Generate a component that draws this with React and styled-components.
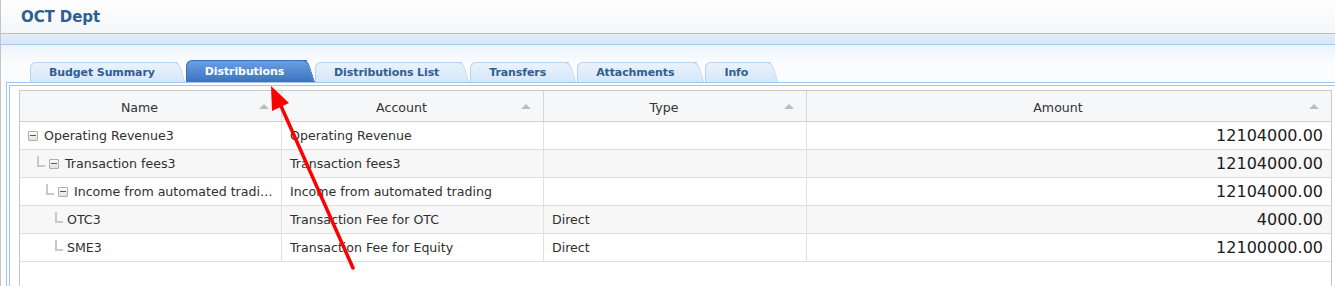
import React from 'react';
import styled, { createGlobalStyle } from 'styled-components';

const GlobalStyle = createGlobalStyle`
html, body {
  margin: 0;
  padding: 0;
  overflow: hidden;
  background: #ffffff;
}
body {
  font-family: "DejaVu Sans", Verdana, sans-serif;
}
`

const Page = styled.div`
position: relative;
width: 1335px;
height: 286px;
overflow: hidden;
border-left: 1px solid #c4c4c4;
box-sizing: border-box;
`

const TitleBar = styled.div`
height: 34px;
box-sizing: border-box;
display: flex;
align-items: center;
padding-left: 20px;
background: linear-gradient(#ffffff, #f4f5f7);
border-bottom: 1px solid #bdbdbd;
`

const Title = styled.h1`
margin: 0;
font-size: 15px;
font-weight: bold;
color: #2c5f94;
letter-spacing: -0.1px;
`

const Band = styled.div`
height: 11px;
box-sizing: border-box;
background: linear-gradient(#e2ecf9, #dae7f7);
border-bottom: 1px solid #a8c8ef;
`

const Workspace = styled.div`
padding: 15px 0 0 5px;
background: linear-gradient(#edf4fc 0px, #fbfcfd 18px, #fbfbfc 100%);
`

const TabStrip = styled.div`
display: flex;
align-items: flex-end;
gap: 2px;
height: 22px;
padding-left: 24px;
`

const Tab = styled.div`
position: relative;
z-index: 0;
height: ${p => (p.$active ? 22 : 20)}px;
box-sizing: border-box;
display: flex;
align-items: center;
padding: 0 23px 0 18px;
margin-right: 6px;
font-size: 11px;
font-weight: bold;
letter-spacing: -0.1px;
color: ${p => (p.$active ? '#ffffff' : '#2f5e92')};
background: ${p => (p.$active
    ? 'linear-gradient(#6a9fe0, #3a73c2)'
    : 'linear-gradient(#e9f3fd, #d5e7f9)')};
border: 1px solid ${p => (p.$active ? '#3b6fb6' : '#b4d2f2')};
border-right: none;
border-bottom: none;
border-top-left-radius: 6px;
white-space: nowrap;

&::after {
  content: '';
  position: absolute;
  z-index: -1;
  top: -1px;
  bottom: 0;
  right: -1px;
  width: 14px;
  background: inherit;
  border: 1px solid ${p => (p.$active ? '#3b6fb6' : '#b4d2f2')};
  border-left: none;
  border-bottom: none;
  border-top-right-radius: 6px;
  transform-origin: top left;
  transform: skewX(18deg);
}
`

const Frame = styled.div`
width: 1339px;
box-sizing: border-box;
border: 1px solid #9ec6f1;
padding: 2px;
background: #ffffff;
`

const FrameInner = styled.div`
border: 1px solid #9ec6f1;
padding: 4px 9px 0 9px;
height: 220px;
`

const Grid = styled.div`
border: 1px solid #c8c8c8;
height: 230px;
background: #ffffff;
`

const Row = styled.div`
display: grid;
grid-template-columns: 262px 262px 263px 1fr;
height: ${p => (p.$header ? 31 : 28)}px;
box-sizing: border-box;
border-bottom: 1px solid ${p => (p.$header ? '#cfcfcf' : '#dedede')};
background: ${p => (p.$header ? '#f6f7f9' : p.$striped ? '#f7f7f7' : '#ffffff')};
`

const HeadCell = styled.div`
display: flex;
align-items: center;
padding-top: 2px;
border-right: 1px solid #d6d6d6;
font-size: 12.6px;
color: #333333;

&:last-child {
  border-right: none;
}
`

const HeadLabel = styled.span`
flex: 1;
text-align: center;
`

const SortArrow = styled.span`
width: 0;
height: 0;
margin: 0 12px 2px 0;
border-left: 5px solid transparent;
border-right: 5px solid transparent;
border-bottom: 5px solid #bdbdbd;
`

const Cell = styled.div`
display: flex;
align-items: center;
justify-content: ${p => (p.$right ? 'flex-end' : 'flex-start')};
min-width: 0;
padding: 0 8px;
border-right: 1px solid #e0e0e0;
font-size: ${p => (p.$right ? '16px' : '12.6px')};
color: ${p => (p.$right ? '#1c1c1c' : '#303030')};
white-space: nowrap;

&:last-child {
  border-right: none;
}
`

const NameCell = styled(Cell)`
padding-left: ${p => 8 + p.$level * 9}px;
`

const Elbow = styled.span`
flex: none;
width: 6px;
height: 9px;
margin: 0 4px 5px 0;
border-left: 2px solid #c8c8c8;
border-bottom: 2px solid #c8c8c8;
`

const Toggle = styled.span`
flex: none;
position: relative;
width: 10px;
height: 10px;
box-sizing: border-box;
margin-right: 6px;
border: 1px solid #adadad;
border-radius: 1px;
background: linear-gradient(#fbfbfb, #e2e2e2);

&::after {
  content: '';
  position: absolute;
  left: 1px;
  right: 1px;
  top: 3px;
  height: 1px;
  background: #555555;
}
`

const Annotation = styled.svg`
position: absolute;
left: 0;
top: 0;
pointer-events: none;
`

const tabs = ['Budget Summary', 'Distributions', 'Distributions List', 'Transfers', 'Attachments', 'Info']
const columns = ['Name', 'Account', 'Type', 'Amount']

const rows = [
  { level: 0, name: 'Operating Revenue3', account: 'Operating Revenue', type: '', amount: '12104000.00', folder: true },
  { level: 1, name: 'Transaction fees3', account: 'Transaction fees3', type: '', amount: '12104000.00', folder: true },
  { level: 2, name: 'Income from automated tradi…', account: 'Income from automated trading', type: '', amount: '12104000.00', folder: true },
  { level: 3, name: 'OTC3', account: 'Transaction Fee for OTC', type: 'Direct', amount: '4000.00' },
  { level: 3, name: 'SME3', account: 'Transaction Fee for Equity', type: 'Direct', amount: '12100000.00' },
]

export default function App () {
  return (
    <Page>
      <GlobalStyle />
      <TitleBar>
        <Title>OCT Dept</Title>
      </TitleBar>
      <Band />
      <Workspace>
        <TabStrip>
          {tabs.map((t, i) => (
            <Tab key={t} $active={i === 1}>{t}</Tab>
          ))}
        </TabStrip>
        <Frame>
          <FrameInner>
            <Grid>
              <Row $header>
                {columns.map(c => (
                  <HeadCell key={c}>
                    <HeadLabel>{c}</HeadLabel>
                    <SortArrow />
                  </HeadCell>
                ))}
              </Row>
              {rows.map((r, i) => (
                <Row key={r.name} $striped={i % 2 === 1}>
                  <NameCell $level={r.level}>
                    {r.level > 0 && <Elbow />}
                    {r.folder && <Toggle />}
                    <span>{r.name}</span>
                  </NameCell>
                  <Cell>{r.account}</Cell>
                  <Cell>{r.type}</Cell>
                  <Cell $right>{r.amount}</Cell>
                </Row>
              ))}
            </Grid>
          </FrameInner>
        </Frame>
      </Workspace>
      <Annotation width='1335' height='286'>
        <line x1='352' y1='268' x2='280' y2='106' stroke='#ff0000' strokeWidth='3.5' strokeLinecap='round' />
        <polygon points='270,86 288,103 271,111' fill='#ff0000' />
      </Annotation>
    </Page>
  )
}
